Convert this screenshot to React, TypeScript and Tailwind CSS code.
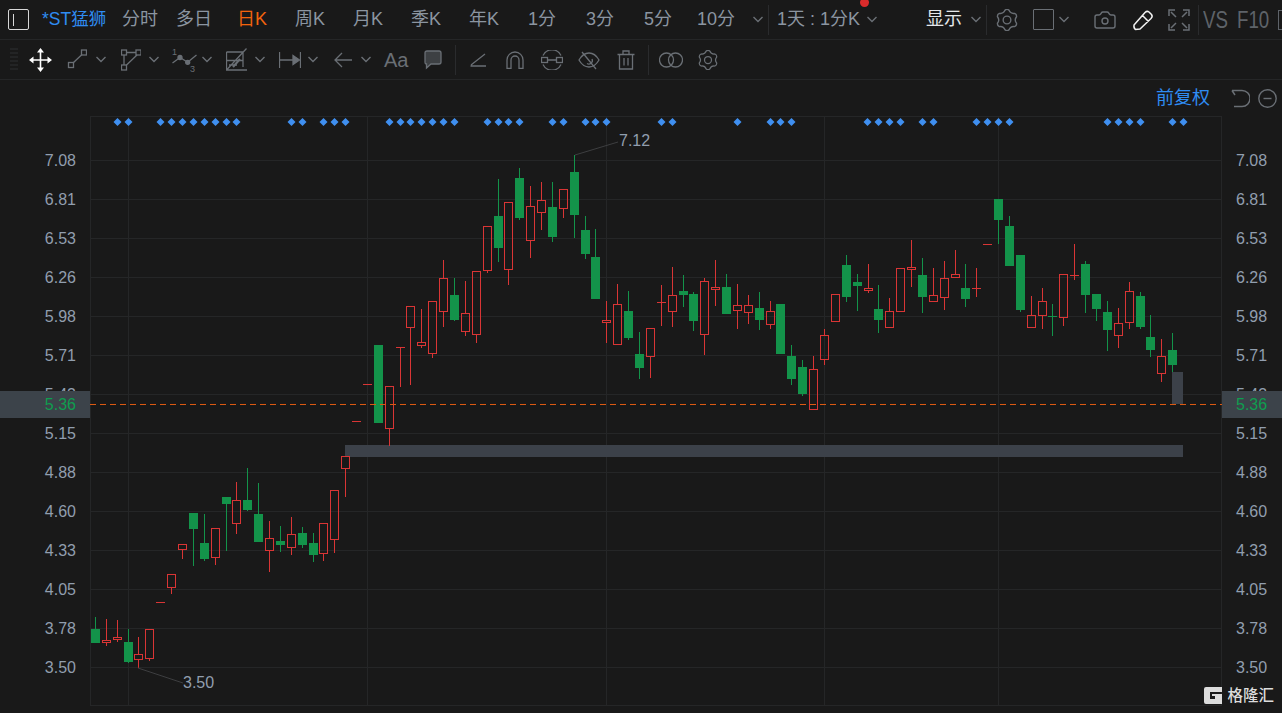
import React from "react";
import { Camera } from "lucide-react";

// x, red?, high, bodyTop, bodyBottom, low (page coordinates)
type Candle = [number, number, number, number, number, number];

const candles: Candle[] = [
  [95, 0, 617, 629, 643, 643], [106, 1, 619, 640, 643, 646], [117, 1, 620, 637, 640, 642], [128, 0, 629, 642, 662, 663],
  [138, 1, 637, 654, 660, 668], [149, 1, 629, 629, 659, 661], [160, 1, 602, 602, 602, 602], [171, 1, 574, 574, 588, 594],
  [182, 1, 544, 544, 550, 559], [193, 0, 513, 513, 529, 566], [204, 0, 514, 543, 559, 561], [215, 1, 528, 528, 558, 565],
  [226, 0, 497, 497, 504, 551], [236, 1, 482, 500, 524, 534], [247, 0, 468, 500, 510, 511], [258, 0, 483, 514, 542, 542],
  [269, 1, 521, 538, 551, 572], [280, 0, 526, 541, 545, 552], [291, 1, 517, 534, 548, 555], [302, 0, 527, 533, 545, 548],
  [313, 0, 533, 543, 555, 562], [323, 1, 523, 523, 554, 561], [334, 1, 490, 490, 540, 553], [345, 1, 456, 456, 469, 497],
  [356, 1, 421, 421, 421, 421], [367, 1, 384, 384, 384, 384], [378, 0, 345, 345, 423, 423], [389, 1, 386, 386, 429, 446],
  [400, 1, 347, 347, 347, 387], [410, 1, 306, 306, 328, 385], [421, 1, 309, 342, 346, 348], [432, 1, 301, 301, 354, 358],
  [443, 1, 260, 278, 312, 327], [454, 0, 278, 295, 320, 321], [465, 1, 281, 313, 332, 336], [476, 1, 271, 271, 335, 343],
  [487, 1, 226, 226, 271, 273], [498, 0, 179, 216, 248, 262], [508, 1, 202, 202, 270, 285], [519, 0, 168, 178, 218, 220],
  [530, 1, 186, 206, 241, 258], [541, 1, 182, 200, 213, 230], [552, 0, 182, 207, 237, 242], [563, 1, 189, 189, 209, 218],
  [574, 0, 155, 172, 215, 238], [585, 0, 216, 230, 254, 259], [595, 0, 229, 257, 299, 299], [606, 1, 301, 320, 323, 343],
  [617, 1, 284, 304, 345, 345], [628, 0, 291, 311, 338, 340], [639, 0, 332, 354, 368, 379], [650, 1, 328, 328, 357, 378],
  [661, 1, 285, 302, 302, 326], [672, 1, 267, 295, 312, 327], [683, 0, 275, 291, 295, 307], [693, 0, 292, 294, 321, 331],
  [704, 1, 278, 281, 335, 355], [715, 1, 260, 287, 290, 306], [726, 0, 274, 287, 314, 314], [737, 1, 284, 305, 311, 329],
  [748, 1, 295, 305, 313, 324], [759, 0, 292, 308, 320, 330], [770, 1, 301, 311, 325, 329], [780, 0, 304, 304, 354, 354],
  [791, 0, 345, 356, 379, 385], [802, 0, 360, 367, 394, 396], [813, 1, 356, 369, 410, 410], [824, 1, 329, 335, 360, 365],
  [835, 1, 294, 294, 322, 322], [846, 0, 255, 265, 297, 302], [857, 0, 274, 282, 286, 311], [868, 1, 264, 288, 291, 293],
  [878, 0, 285, 309, 320, 333], [889, 1, 298, 311, 328, 328], [900, 1, 268, 268, 312, 312], [911, 1, 240, 267, 270, 287],
  [922, 0, 258, 275, 297, 313], [933, 1, 268, 295, 302, 302], [944, 1, 261, 278, 298, 310], [955, 1, 250, 274, 278, 278],
  [965, 0, 264, 288, 299, 307], [976, 1, 268, 288, 288, 297], [987, 1, 244, 244, 244, 244], [998, 0, 199, 199, 220, 244],
  [1009, 0, 216, 226, 266, 266], [1020, 0, 255, 255, 310, 312], [1031, 1, 296, 315, 328, 328], [1042, 1, 288, 301, 316, 329],
  [1052, 0, 304, 316, 316, 336], [1063, 1, 274, 274, 318, 326], [1074, 1, 244, 275, 275, 280], [1085, 0, 261, 264, 295, 313],
  [1096, 0, 294, 294, 309, 321], [1107, 0, 301, 312, 330, 351], [1118, 1, 308, 323, 336, 348], [1129, 1, 282, 291, 323, 329],
  [1140, 0, 292, 296, 327, 329], [1150, 0, 315, 337, 350, 357], [1161, 1, 339, 356, 374, 382], [1172, 0, 333, 350, 365, 372],
];

const diamonds = [
  117, 128, 160, 171, 182, 193, 204, 215, 226, 236, 291, 302, 323, 334, 345, 389, 400, 410, 421, 432, 443, 454, 487, 498, 508, 519,
  552, 563, 585, 595, 606, 661, 672, 737, 770, 780, 791, 867, 878, 889, 900, 922, 933, 976, 987, 998, 1009, 1107, 1118, 1129, 1140,
  1172, 1183,
];

const prices = ["7.08", "6.81", "6.53", "6.26", "5.98", "5.71", "5.43", "5.15", "4.88", "4.60", "4.33", "4.05", "3.78", "3.50"];
const vLines = [128, 367, 606, 824, 998];

const RED = "#d93535";
const GREEN = "#13934a";
const GRID = "#252627";
const ICON = "#6a6f75";

// six-lobed gear outline, 24x24 box
const gearPath = (() => {
  const polar = (deg: number, r: number) => {
    const a = (deg * Math.PI) / 180;
    return `${(12 + r * Math.cos(a)).toFixed(2)} ${(12 + r * Math.sin(a)).toFixed(2)}`;
  };
  let d = `M${polar(-101, 11)}`;
  for (let k = 0; k < 6; k++) {
    const c = -90 + k * 60;
    d += ` Q${polar(c, 12.4)} ${polar(c + 11, 11)} Q${polar(c + 30, 7.6)} ${polar(c + 49, 11)}`;
  }
  return d + " Z";
})();

const Gear = ({ size, className = "" }: { size: number; className?: string }) => (
  <svg width={size} height={size} viewBox="0 0 24 24" className={`shrink-0 ${className}`} fill="none" stroke={ICON} strokeWidth="1.5">
    <path d={gearPath} />
    <circle cx="12" cy="12" r="4.2" />
  </svg>
);

const Chevron = ({ className = "" }: { className?: string }) => (
  <svg width="12" height="7" viewBox="0 0 12 7" className={`shrink-0 ${className}`} fill="none" stroke={ICON} strokeWidth="1.4">
    <path d="M1.5 1 L6 5.5 L10.5 1" />
  </svg>
);

const Sep = ({ className = "" }: { className?: string }) => <div className={`w-px h-[30px] bg-[#2a2b2d] shrink-0 ${className}`} />;

const Axis = ({ align }: { align: "left" | "right" }) => (
  <div className={`relative shrink-0 pt-[25px] text-[16px] text-[#919eae] ${align === "left" ? "w-[90px]" : "w-[60px]"}`}>
    {prices.map((p) => (
      <div key={p} className={`h-[39px] flex items-center ${align === "left" ? "justify-end pr-[14px]" : "pl-[14px]"}`}>
        {p}
      </div>
    ))}
    <div className={`absolute left-0 top-[275px] w-full h-[27px] bg-[#3c434a] flex items-center text-[#0f9d4f] ${align === "left" ? "justify-end pr-[14px]" : "pl-[14px]"}`}>
      5.36
    </div>
  </div>
);

const Chart = () => (
  <svg width="1132" height="590" viewBox="90 116 1132 590" className="block shrink-0">
    <g stroke={GRID} strokeWidth="1" shapeRendering="crispEdges">
      <path d="M90.5 116 V706 M1221.5 116 V706 M90 116.5 H1222 M90 705.5 H1222" fill="none" />
      {prices.map((_, i) => (
        <line key={i} x1="90" x2="1222" y1={160.5 + i * 39} y2={160.5 + i * 39} />
      ))}
      {vLines.map((x) => (
        <line key={x} x1={x + 0.5} x2={x + 0.5} y1="116" y2="706" />
      ))}
    </g>

    {diamonds.map((x) => (
      <path key={x} d={`M${x + 0.5} 118 L${x + 4.5} 122 L${x + 0.5} 126 L${x - 3.5} 122 Z`} fill="#3f8ff0" />
    ))}

    <g fill="#3c4149">
      <rect x="345" y="445" width="838" height="12" />
      <rect x="1172" y="372" width="11" height="32" />
    </g>

    <g shapeRendering="crispEdges">
      {candles.map(([x, red, h, t, b, l]) => {
        const c = red ? RED : GREEN;
        return (
          <g key={x} stroke={c} strokeWidth="1">
            {h < t && <line x1={x + 0.5} x2={x + 0.5} y1={h} y2={t} />}
            {l > b && <line x1={x + 0.5} x2={x + 0.5} y1={b} y2={l} />}
            {t === b ? (
              <line x1={x - 4} x2={x + 5} y1={t + 0.5} y2={t + 0.5} />
            ) : red ? (
              <rect x={x - 3.5} y={t + 0.5} width="8" height={b - t - 1} fill="none" />
            ) : (
              <rect x={x - 4} y={t} width="9" height={b - t} fill={c} stroke="none" />
            )}
          </g>
        );
      })}
    </g>

    <line x1="90" x2="1222" y1="404.5" y2="404.5" stroke="#dd5a12" strokeWidth="1" strokeDasharray="6 4" shapeRendering="crispEdges" />

    <g stroke="#3d3e40" strokeWidth="1" fill="none">
      <path d="M575 155 L618 142" />
      <path d="M138 668 L183 683" />
    </g>
    <g fill="#919eae" fontSize="16">
      <text x="619" y="146">7.12</text>
      <text x="183" y="688">3.50</text>
    </g>
  </svg>
);

const MoveIcon = ({ className = "" }: { className?: string }) => (
  <svg width="23" height="24" viewBox="0 0 23 24" className={`shrink-0 ${className}`}>
    <path d="M11.5 3 V21 M3 12 H20" stroke="#fff" strokeWidth="1.6" />
    <path d="M11.5 0 L15 4.5 H8 Z M11.5 24 L15 19.5 H8 Z M0 12 L4.5 8.5 V15.5 Z M23 12 L18.5 8.5 V15.5 Z" fill="#fff" />
  </svg>
);

const Tool = ({ w, h = 22, className = "", children }: { w: number; h?: number; className?: string; children: React.ReactNode }) => (
  <svg width={w} height={h} viewBox={`0 0 ${w} ${h}`} className={`shrink-0 ${className}`} fill="none" stroke={ICON} strokeWidth="1.3">
    {children}
  </svg>
);

const TopBar = () => (
  <div className="h-[40px] shrink-0 flex items-center border-b border-[#252627] text-[18px] text-[#8b95a1] overflow-hidden">
    <div className="ml-[8px] w-[21px] h-[21px] shrink-0 border border-[#d8d8d8] rounded-[2px] flex items-center pl-[4px]">
      <div className="w-px h-[12px] bg-[#d8d8d8]" />
    </div>
    <span className="ml-[13px] w-[71px] shrink-0 text-[#2f8cf2] text-[17.5px] whitespace-nowrap">*ST猛狮</span>
    <span className="w-[54px] shrink-0 text-center">分时</span>
    <span className="w-[54px] shrink-0 text-center">多日</span>
    <span className="ml-[2px] w-[58px] shrink-0 text-center text-[#f2630d]">日K</span>
    <span className="w-[58px] shrink-0 text-center">周K</span>
    <span className="w-[58px] shrink-0 text-center">月K</span>
    <span className="w-[58px] shrink-0 text-center">季K</span>
    <span className="w-[58px] shrink-0 text-center">年K</span>
    <span className="w-[58px] shrink-0 text-center">1分</span>
    <span className="w-[58px] shrink-0 text-center">3分</span>
    <span className="w-[58px] shrink-0 text-center">5分</span>
    <span className="w-[58px] shrink-0 text-center">10分</span>
    <Chevron className="ml-[7px]" />
    <Sep className="ml-[4px]" />
    <span className="relative ml-[8px] w-[81px] shrink-0 whitespace-nowrap">
      1天 : 1分K
      <span className="absolute left-[83px] top-[-8px] w-[9px] h-[9px] rounded-full bg-[#d92b2b]" />
    </span>
    <Chevron className="ml-[8px]" />
    <span className="ml-[48px] shrink-0 text-[#e4e7ea]">显示</span>
    <Chevron className="ml-[8px]" />
    <Sep className="ml-[4px]" />
    <Gear size={22} className="ml-[9px]" />
    <div className="ml-[15px] w-[21px] h-[21px] shrink-0 border border-[#6a6f75] rounded-[1px]" />
    <Chevron className="ml-[4px]" />
    <Camera size={24} color={ICON} strokeWidth={1.4} className="ml-[23px] shrink-0" />
    <Tool w={22} className="ml-[15px]">
      <path d="M2 16 L13 3.5 Q15 1.5 17 3 L19.5 5.5 Q21 7.5 19 9.5 L8 20 L3.5 20.5 Q1.5 19 2 16 Z M10.5 6.5 L16.5 12.5" stroke="#f1f1f1" strokeWidth="1.5" />
    </Tool>
    <Tool w={22} className="ml-[14px]">
      <path d="M1 7 V1 H7 M15 1 H21 V7 M21 15 V21 H15 M7 21 H1 V15 M3 3 L8 8 M19 3 L14 8 M19 19 L14 14 M3 19 L8 14" strokeWidth="1.5" />
    </Tool>
    <Sep className="ml-[8px]" />
    <span className="ml-[4px] w-[25px] shrink-0 whitespace-nowrap text-[24px] text-[#5e6369] origin-left scale-x-[.78]">VS</span>
    <span className="ml-[9px] w-[32px] shrink-0 whitespace-nowrap text-[24px] text-[#5e6369] origin-left scale-x-[.78]">F10</span>
    <div className="ml-[9px] w-[20px] h-[20px] shrink-0 border border-[#5e6369]" />
  </div>
);

const ToolBar = () => (
  <div className="h-[40px] shrink-0 flex items-center border-b border-[#252627] overflow-hidden">
    <div className="ml-[10px] w-[8px] h-[24px] shrink-0 bg-[repeating-linear-gradient(180deg,#232425_0_2px,transparent_2px_4px)]" />
    <MoveIcon className="ml-[11px]" />
    <Tool w={20} className="ml-[15px]">
      <rect x="1.5" y="13.5" width="5" height="5" />
      <rect x="14.5" y="1" width="5" height="5" />
      <path d="M6 14 L15 5.5" />
    </Tool>
    <Chevron className="ml-[8px]" />
    <Tool w={20} className="ml-[14px]">
      <rect x="0.5" y="1" width="5" height="5" />
      <rect x="15" y="1" width="5" height="5" />
      <rect x="0.5" y="16" width="5" height="5" />
      <path d="M5.5 3.5 H15 M3 6 V16 M5 16.5 L16 6" />
    </Tool>
    <Chevron className="ml-[7px]" />
    <Tool w={25} h={30} className="ml-[12px]">
      <path d="M0.5 18 L8 12.5 L15.7 17.3 L24.5 10" />
      <circle cx="8" cy="12.5" r="2" fill={ICON} />
      <circle cx="15.7" cy="17.3" r="2" fill={ICON} />
      <text x="0" y="10" fontSize="9" fill={ICON} stroke="none">1</text>
      <text x="18" y="27" fontSize="9" fill={ICON} stroke="none">3</text>
    </Tool>
    <Chevron className="ml-[4px]" />
    <Tool w={21} h={23} className="ml-[13px]">
      <path d="M0.5 4 V22 H21 M0.5 4 H17 V19 M0.5 12.5 H17 M1 21.5 L20.5 0.5 M3 17 H11" />
      <path d="M7 19 L14 11" strokeWidth="2" />
    </Tool>
    <Chevron className="ml-[7px]" />
    <Tool w={22} h={16} className="ml-[13px]">
      <path d="M0.5 0 V16 M21.5 0 V16 M0.5 8 H16" />
      <path d="M14 3.5 L20.5 8 L14 12.5 Z" fill={ICON} />
    </Tool>
    <Chevron className="ml-[6px]" />
    <Tool w={18} h={16} className="ml-[15px]">
      <path d="M18 8 H1 M8 1 L1 8 L8 15" />
    </Tool>
    <Chevron className="ml-[8px]" />
    <span className="ml-[12px] w-[23px] shrink-0 text-[20px] leading-none text-[#6a6f75]">Aa</span>
    <Tool w={18} h={20} className="ml-[17px]">
      <path d="M3 1 H15 Q17 1 17 3 V12 Q17 14 15 14 H7 L2.5 18 V14 Q1 14 1 12 V3 Q1 1 3 1 Z" fill="#3d4043" />
    </Tool>
    <Sep className="ml-[13px]" />
    <Tool w={16} h={14} className="ml-[14px]">
      <path d="M0.5 13 H16 M1 12 L15 1" />
    </Tool>
    <Tool w={18} h={18} className="ml-[20px]">
      <path d="M1 17.5 V9 A8 8 0 0 1 17 9 V17.5 H13 V9 A4 4 0 0 0 5 9 V17.5 Z" />
    </Tool>
    <Tool w={22} h={20} className="ml-[17px]">
      <rect x="0.5" y="7.5" width="6" height="5" />
      <rect x="15.5" y="7.5" width="6" height="5" />
      <path d="M6.5 10 H15.5 M2 5.5 A10 10 0 0 1 20 5.5 M2 14.5 A10 10 0 0 0 20 14.5" />
    </Tool>
    <Tool w={22} h={20} className="ml-[15px]">
      <path d="M1 10 Q5 3 11 3 Q17 3 21 10 Q17 17 11 17 Q5 17 1 10 Z M4 2 L18 19" />
      <path d="M14 9 A3.5 3.5 0 0 1 9 13.5" />
    </Tool>
    <Tool w={18} h={20} className="ml-[17px]">
      <path d="M0.5 4.5 H17.5 M6 4.5 V1 H12 V4.5 M2.5 4.5 V19 H15.5 V4.5 M7 8 V15.5 M11 8 V15.5" />
    </Tool>
    <Sep className="ml-[13px]" />
    <Tool w={24} h={16} className="ml-[10px]">
      <circle cx="7.5" cy="8" r="7" />
      <circle cx="16.5" cy="8" r="7" />
    </Tool>
    <Gear size={20} className="ml-[15px]" />
  </div>
);

const Logo = () => (
  <div className="absolute right-[8px] bottom-[9px] flex items-center gap-[5px]">
    <svg width="18" height="17" viewBox="0 0 18 17" className="shrink-0">
      <path d="M2 0 H18 V5 H6 V12 H11 V9 H8 V7 H18 V17 H2 Q0 17 0 15 V2 Q0 0 2 0 Z" fill="#dcdcdc" />
    </svg>
    <span className="text-[15.5px] leading-none font-medium text-[#dcdcdc] whitespace-nowrap">格隆汇</span>
  </div>
);

export default function App() {
  return (
    <div className="relative w-[1282px] h-[713px] overflow-hidden flex flex-col bg-[#191919] [font-family:'Liberation_Sans','Noto_Sans_CJK_SC',sans-serif]">
      <TopBar />
      <ToolBar />
      <div className="h-[36px] shrink-0 flex items-center justify-end pr-[5px]">
        <span className="text-[18px] text-[#2f8cf2]">前复权</span>
        <Tool w={19} h={19} className="ml-[21px]">
          <path d="M1 1.5 L4 6 M1 1.5 H11 A8 8 0 0 1 11 17.5 H3" strokeWidth="1.5" />
        </Tool>
        <Tool w={19} h={19} className="ml-[8px]">
          <circle cx="9.5" cy="9.5" r="8.7" strokeWidth="1.4" />
          <path d="M5.5 9.5 H13.5" strokeWidth="1.4" />
        </Tool>
      </div>
      <div className="flex-1 flex items-start">
        <Axis align="left" />
        <Chart />
        <Axis align="right" />
      </div>
      <Logo />
    </div>
  );
}
